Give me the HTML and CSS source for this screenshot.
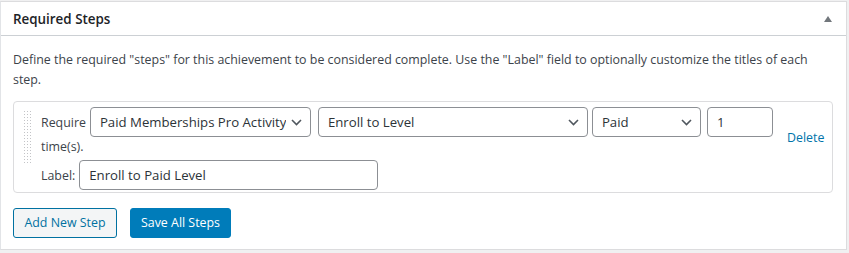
FILE: index.html
```html
<!DOCTYPE html>
<html lang="en">
<head>
<meta charset="utf-8">
<title>Required Steps</title>
<link rel="stylesheet" href="styles.css">
</head>
<body>
<div class="postbox">
  <div class="postbox-header">
    <h2 class="hndle">Required Steps</h2>
    <span class="toggle">
      <svg width="10" height="8" viewBox="0 0 10 8"><path d="M1 7 L5 1 L9 7 Z" fill="#72777c"/></svg>
    </span>
  </div>
  <div class="inside">
    <p class="desc">Define the required "steps" for this achievement to be considered complete. Use the "Label" field to optionally customize the titles of each step.</p>
    <div class="step">
      <div class="handle">
        <svg width="8" height="54" viewBox="0 0 8 54">
          <defs>
            <pattern id="dots" width="3" height="3" patternUnits="userSpaceOnUse">
              <rect x="0" y="0" width="1" height="1" fill="#c3c4c7"/>
            </pattern>
          </defs>
          <rect x="0" y="0" width="8" height="54" fill="url(#dots)"/>
        </svg>
      </div>
      <div class="step-main">
        <div class="row1">
          <span class="lbl">Require</span>
          <div class="select w1"><span>Paid Memberships Pro Activity</span><svg class="chev" width="11" height="7" viewBox="0 0 11 7"><path d="M1 1 L5.5 5.5 L10 1" fill="none" stroke="#50575e" stroke-width="1.6"/></svg></div>
          <div class="select w2"><span>Enroll to Level</span><svg class="chev" width="11" height="7" viewBox="0 0 11 7"><path d="M1 1 L5.5 5.5 L10 1" fill="none" stroke="#50575e" stroke-width="1.6"/></svg></div>
          <div class="select w3"><span>Paid</span><svg class="chev" width="11" height="7" viewBox="0 0 11 7"><path d="M1 1 L5.5 5.5 L10 1" fill="none" stroke="#50575e" stroke-width="1.6"/></svg></div>
          <div class="input w4">1</div>
        </div>
        <div class="times">time(s).</div>
        <div class="row3">
          <span class="lbl">Label:</span>
          <div class="input w5">Enroll to Paid Level</div>
        </div>
      </div>
      <a class="delete" href="#">Delete</a>
    </div>
    <div class="actions">
      <button class="btn btn-secondary">Add New Step</button>
      <button class="btn btn-primary">Save All Steps</button>
    </div>
  </div>
</div>
</body>
</html>
```
FILE: styles.css
```css
html, body {
  margin: 0;
  padding: 0;
}
body {
  background: #f0f0f1;
  font-family: "Open Sans", "Noto Sans", sans-serif;
  font-size: 12.4px;
  color: #3c434a;
  width: 849px;
  height: 253px;
  overflow: hidden;
}
.postbox {
  margin: 1px 2px 0 0;
  width: 845px;
  height: 247px;
  background: #fff;
  border: 1px solid #dcdcde;
  border-left-color: #e2e4e7;
}
.postbox-header {
  display: flex;
  align-items: center;
  justify-content: space-between;
  height: 33px;
  border-bottom: 1px solid #ccd0d4;
}
.hndle {
  margin: 0;
  padding: 0 12px;
  font-size: 13.4px;
  font-weight: 600;
  color: #1d2327;
  line-height: 20px;
}
.toggle {
  display: flex;
  margin-right: 13px;
}
.inside {
  padding: 0 12px 0 12px;
}
.desc {
  margin: 14px 0 0 0;
  line-height: 19.5px;
}
.step {
  margin-top: 12px;
  width: 818px;
  height: 90px;
  border: 1px solid #dcdcde;
  border-radius: 4px;
  display: flex;
  align-items: flex-start;
  box-sizing: content-box;
}
.handle {
  display: flex;
  flex-shrink: 0;
  margin: 9px 0 0 10px;
  width: 8px;
}
.step-main {
  flex-shrink: 0;
  margin: 5px 0 0 9px;
}
.row1, .row3 {
  display: flex;
  align-items: center;
}
.lbl {
  flex-shrink: 0;
  white-space: nowrap;
  margin-right: 4px;
}
.select, .input {
  flex-shrink: 0;
  box-sizing: border-box;
  height: 30px;
  border: 1px solid #8c8f94;
  border-radius: 4px;
  display: flex;
  align-items: center;
  justify-content: space-between;
  padding: 0 8px 0 9px;
  font-size: 13.2px;
  color: #2c3338;
  background: #fff;
  white-space: nowrap;
}
.select span {
  overflow: hidden;
}
.chev {
  flex-shrink: 0;
  margin-left: 4px;
}
.w1 { width: 221px; margin-right: 7px; }
.w2 { width: 270px; margin-right: 4px; }
.w3 { width: 109px; margin-right: 6px; }
.w4 { width: 66px; padding-left: 9px; }
.w5 { width: 299px; padding-left: 9px; }
.times {
  line-height: 20px;
}
.row3 {
  margin-top: 3px;
}
.delete {
  margin: 26px 0 0 14px;
  color: #0073aa;
  text-decoration: none;
  line-height: 20px;
}
.actions {
  display: flex;
  gap: 13px;
  margin-top: 15px;
}
.btn {
  box-sizing: border-box;
  height: 30px;
  padding: 0 10px;
  font-family: inherit;
  font-size: 12.4px;
  border-radius: 3px;
  border: 1px solid;
  line-height: 28px;
}
.btn-secondary {
  width: 104px;
  color: #0071a1;
  border-color: #0071a1;
  background: #f3f5f6;
}
.btn-primary {
  width: 101px;
  color: #fff;
  border-color: #007cba;
  background: #007cba;
}
```
